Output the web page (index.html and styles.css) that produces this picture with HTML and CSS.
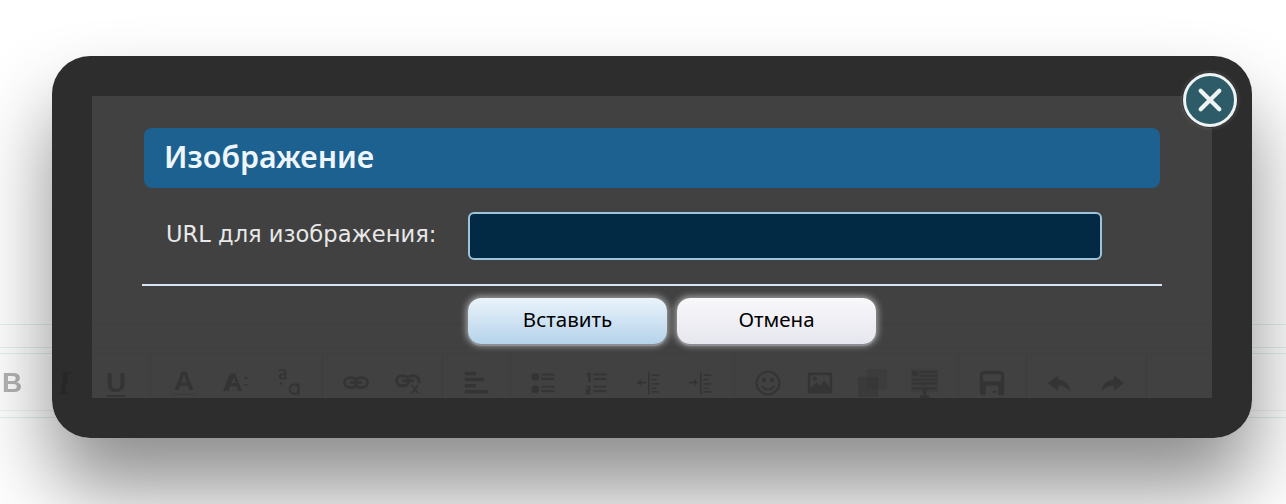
FILE: index.html
```html
<!DOCTYPE html>
<html lang="ru">
<head>
<meta charset="utf-8">
<title>Изображение</title>
<link rel="stylesheet" href="styles.css">
</head>
<body>
<div class="editor">
  <div class="tabs"></div>
  <div class="toolbar">
    <div class="group">
      <span class="slot glyph bold">B</span>
      <span class="slot glyph italic">I</span>
      <span class="slot glyph under">U</span>
    </div>
    <div class="group">
      <span class="slot"><svg viewBox="0 0 32 32"><path d="M5 24 13 3h6l8 21h-5l-1.500-5h-9L10 24zM13 15h6l-3-8z"/><rect class="soft" x="1" y="28" width="30" height="2"/></svg></span>
      <span class="slot"><svg viewBox="0 0 32 32"><path d="M1 25 9 5h6l8 20h-5l-1.500-5h-7L8 25zM11 16h5l-2.500-6zM25 11l2.500-3 2.500 3zM25 17h5l-2.500 3z"/></svg></span>
      <span class="slot"><svg viewBox="0 0 32 32" class="line"><path d="M6 2c1-2 7-2 7 1v9M13 6c-8-1-8 6-2 5 1 0 2-1 2-2M8 15v3M18 23a5 5.500 0 1 1 10 0 5 5.500 0 1 1-10 0M28 16v14"/></svg></span>
    </div>
    <div class="group">
      <span class="slot"><svg viewBox="0 0 32 32" class="line thick"><rect x="3" y="10" width="14" height="11" rx="5.500"/><rect x="15" y="10" width="14" height="11" rx="5.500"/><path d="M9 15.500h14"/></svg></span>
      <span class="slot"><svg viewBox="0 0 32 32"><g class="line thick"><rect x="3" y="8" width="14" height="11" rx="5.500"/><path d="M17 8h6a5.500 5.500 0 0 1 5 8M9 13.500h14"/></g><path d="M19 18h3l2 3 2-3h3l-3.500 5 3.500 5h-3l-2-3-2 3h-3l3.500-5z"/></svg></span>
    </div>
    <div class="group">
      <span class="slot"><svg viewBox="0 0 32 32"><path d="M3 3h13v4H3zM3 10h22v4H3zM3 17h13v4H3zM3 24h27v4H3z"/></svg></span>
    </div>
    <div class="group">
      <span class="slot"><svg viewBox="0 0 32 32"><circle cx="6" cy="9" r="4.500"/><circle cx="6" cy="23" r="4.500"/><path d="M13 5h15v2.500H13zM13 10h15v2.500H13zM13 19h15v2.500H13zM13 24h15v2.500H13z"/></svg></span>
      <span class="slot"><svg viewBox="0 0 32 32"><path d="M5 5l3-1h2v11H7V7H5zM4 19h6v6l-3 2h3v2H4v-5l3-2v-1H4zM13 5h15v2.500H13zM13 10h15v2.500H13zM13 19h15v2.500H13zM13 24h15v2.500H13z"/></svg></span>
      <span class="slot"><svg viewBox="0 0 32 32"><path d="M16 3h2v26h-2zM20 6h9v2h-9zM20 11h6v2h-6zM20 16h9v2h-9zM20 21h6v2h-6zM20 25h9v2h-9zM3 15.500l5-4v3h6v2H8v3z"/></svg></span>
      <span class="slot"><svg viewBox="0 0 32 32"><path d="M16 3h2v26h-2zM20 6h9v2h-9zM20 11h6v2h-6zM20 16h9v2h-9zM20 21h6v2h-6zM20 25h9v2h-9zM14 15.500l-5-4v3H3v2h6v3z"/></svg></span>
    </div>
    <div class="group">
      <span class="slot"><svg viewBox="0 0 32 32"><g class="line"><circle cx="16" cy="16" r="13"/><path d="M9 19c3 6 11 6 14 0"/></g><circle cx="11.500" cy="12.500" r="2.500"/><circle cx="20.500" cy="12.500" r="2.500"/></svg></span>
      <span class="slot"><svg viewBox="0 0 32 32"><path fill-rule="evenodd" d="M2 4h28v24H2zM5 7v15l7-7 4 4 5-6 6 7V7z"/><circle cx="10" cy="11" r="2.500"/></svg></span>
      <span class="slot"><svg class="wide" viewBox="0 0 32 32"><rect class="soft" x="10" y="1" width="21" height="21" rx="1"/><rect class="mid" x="1" y="9" width="21" height="21" rx="1"/></svg></span>
      <span class="slot"><svg class="wide" viewBox="0 0 32 32"><rect class="soft" x="2" y="1" width="28" height="24"/><path d="M3 3h6v5H3zM11 3h18v2H11zM11 7h18v2H11zM3 11h26v2H3zM3 15h26v2H3zM3 20h26v2H3zM14 22h4v6h3v3H11v-3h3z"/></svg></span>
    </div>
    <div class="group">
      <span class="slot"><svg viewBox="0 0 32 32"><path fill-rule="evenodd" d="M7 2h18a5 5 0 0 1 5 5v20a3 3 0 0 1-3 3H6a4 4 0 0 1-4-4V7a5 5 0 0 1 5-5zM7 6h-1v8h20V6zM9 19v11h14V19zM12 22h4v5h5v-3h-2v1h-3v-3z"/></svg></span>
    </div>
    <div class="group">
      <span class="slot"><svg viewBox="0 0 32 32"><path d="M14 7 2 16l12 9v-6c6 0 10 2 14 7-1-8-5-13-14-14z"/></svg></span>
      <span class="slot"><svg viewBox="0 0 32 32"><path d="M18 7l12 9-12 9v-6c-6 0-10 2-14 7 1-8 5-13 14-14z"/></svg></span>
    </div>
  </div>
</div>

<section class="dialog">
  <button class="close" type="button" aria-label="Закрыть">
    <svg viewBox="0 0 24 24"><path d="M5 5 19 19M19 5 5 19"/></svg>
  </button>
  <h2 class="title">Изображение</h2>
  <div class="field">
    <label class="label" for="url">URL для изображения:</label>
    <input class="input" id="url" type="text">
  </div>
  <hr class="rule">
  <div class="actions">
    <button class="btn primary" type="button">Вставить</button>
    <button class="btn" type="button">Отмена</button>
  </div>
</section>
</body>
</html>
```
FILE: styles.css
```css
* { box-sizing: border-box; }
html, body { margin: 0; height: 504px; overflow: hidden; background: #fff; }
body { position: relative; font-family: "DejaVu Sans", sans-serif; }

.editor { padding-top: 324px; filter: blur(0.7px); }
.tabs { height: 24px; border-top: 1px solid #e4f0f3; border-bottom: 1px solid #e4f0f3; }
.toolbar {
  margin-top: 5px; height: 65px; margin-left: -14px; width: 1320px;
  display: flex; align-items: flex-start;
  border-top: 1px solid #e4f0f3; border-bottom: 1px solid #e4f0f3;
  box-shadow: inset 0 -6px 0 #fff, inset 0 -7px 0 #ecf4f6;
}
.group { display: flex; padding: 13px 8px 0 0; margin-right: 7px; height: 50px; border-right: 1px solid #e8e8e8; flex: none; }
.slot { width: 52px; height: 32px; display: flex; align-items: center; justify-content: center; flex: none; color: #b4b4b4; }
.slot svg { width: 28px; height: 28px; fill: #b4b4b4; display: block; flex: none; }
.slot svg.wide { width: 31px; height: 31px; }
.slot svg .soft { opacity: .4; }
.slot svg .mid { opacity: .6; }
.line, .slot svg.line { fill: none; stroke: #b4b4b4; stroke-width: 2.5; }
.thick, .slot svg.thick { stroke-width: 3.5; }
.glyph { font: bold 28px "Liberation Sans", sans-serif; }
.glyph.italic { font: italic bold 34px "Liberation Serif", serif; color: #8c8c8c; }
.under { text-decoration: underline; text-underline-offset: 3px; }

.dialog {
  position: absolute; left: 52px; top: 56px; width: 1200px; height: 382px;
  border: 40px solid rgba(34, 34, 34, .95);
  border-radius: 38px;
  background: rgba(27, 27, 27, .83);
  background-clip: padding-box;
  box-shadow: 0 50px 80px rgba(0, 0, 0, .45);
  padding: 32px 52px 0 50px;
}
.close {
  position: absolute; right: -25px; top: -23px; width: 54px; height: 54px; padding: 0;
  border-radius: 50%; border: 3px solid #eef3f3; background: #2d5c68;
  box-shadow: 0 0 0 1px #333, 0 0 4px rgba(255,255,255,.3);
  display: flex; align-items: center; justify-content: center;
}
.close svg { width: 32px; height: 32px; fill: none; stroke: #eef3f3; stroke-width: 3.2; stroke-linecap: round; }
.title {
  margin: 0 0 0 2px; height: 60px; border-radius: 8px; background: #1c6190; color: #eef6fc;
  font: 600 30.3px/58px "Noto Sans", sans-serif; padding-left: 20px;
}
.field { display: flex; align-items: center; margin: 24px 0 0 24px; height: 48px; }
.label { width: 302px; color: #e8e8e8; font-size: 22.6px; flex: none; padding-bottom: 4px; }
.input { width: 634px; height: 48px; background: #022a45; border: 2px solid #9cc4dc; border-radius: 6px; outline: none; }
.rule { margin: 24px -2px 0 0; height: 2px; border: 0; background: #d5e5f5; }
.actions { display: flex; justify-content: center; gap: 10px; margin-top: 12px; padding-left: 42px; }
.btn {
  width: 199px; height: 46px; border: 0; border-radius: 13px; color: #000;
  font: 20.5px/42px "Noto Sans", sans-serif; padding: 0 0 4px;
  background: linear-gradient(#f8f8fb, #e6e6ee);
  box-shadow: 0 2px 1px #8e8e96, 0 0 6px 2px rgba(255,255,255,.5);
}
.primary { background: linear-gradient(#eaf3fa, #b5d3ea); }
```
